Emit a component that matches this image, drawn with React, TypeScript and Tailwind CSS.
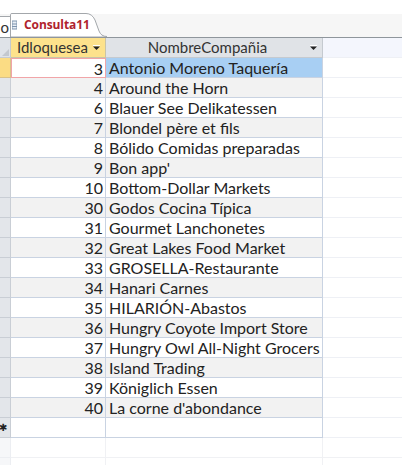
import React from "react";

const rows: Array<[number, string]> = [
    [3, "Antonio Moreno Taquería"],
    [4, "Around the Horn"],
    [6, "Blauer See Delikatessen"],
    [7, "Blondel père et fils"],
    [8, "Bólido Comidas preparadas"],
    [9, "Bon app'"],
    [10, "Bottom-Dollar Markets"],
    [30, "Godos Cocina Típica"],
    [31, "Gourmet Lanchonetes"],
    [32, "Great Lakes Food Market"],
    [33, "GROSELLA-Restaurante"],
    [34, "Hanari Carnes"],
    [35, "HILARIÓN-Abastos"],
    [36, "Hungry Coyote Import Store"],
    [37, "Hungry Owl All-Night Grocers"],
    [38, "Island Trading"],
    [39, "Königlich Essen"],
    [40, "La corne d'abondance"],
];

const DropArrow = () => (
    <svg width="9" height="6" viewBox="0 0 9 6" className="shrink-0">
        <rect x="1" y="0" width="7" height="1" fill="#ffffff" />
        <path d="M1 1.5 H8 L4.5 5 Z" fill="#222222" />
    </svg>
);

const Tab = () => (
    <div className="relative w-[97px] h-[24px] -ml-px">
        <svg width="97" height="24" viewBox="0 0 97 24" className="absolute inset-0">
            <path d="M0.5 24 V1.5 Q0.5 0.5 2 0.5 H76 Q82 0.5 85 7 L89 18 Q91 23.5 97 23.5 V24 Z" fill="#ffffff" stroke="#a3a7ab" />
        </svg>
        <div className="relative flex items-center h-full pl-[2px] gap-[7px]">
            <svg width="5" height="10" viewBox="0 0 5 10">
                <rect x="0" y="1" width="5" height="8" fill="#e8eef5" stroke="#7d93ad" strokeWidth="1" />
                <path d="M0 4 H5 M0 6.5 H5" stroke="#7d93ad" strokeWidth="1" />
            </svg>
            <span className="text-[12px] font-bold text-[#b0232d] tracking-[-0.1px]" style={{ fontFamily: "'Open Sans', 'Noto Sans', sans-serif" }}>
                Consulta11
            </span>
        </div>
    </div>
);

const App = () => {
    return (
        <div className="w-[402px] h-[465px] overflow-hidden bg-white text-[#222222]" style={{ fontFamily: "Lato, 'Liberation Sans', sans-serif" }}>
            <div className="h-[14px]" />
            {/* tab strip */}
            <div className="flex items-end h-[24px] bg-[#f6f6f6] border-b border-[#8f969c]">
                <div className="w-[11px] h-[21px] bg-white border-r border-t border-[#a3a7ab] flex items-center justify-end overflow-hidden">
                    <span className="text-[15px] text-[#333] leading-none pr-[1px]">o</span>
                </div>
                <Tab />
            </div>

            {/* header */}
            <div className="flex h-[20px] text-[15px] leading-none">
                <div className="relative w-[11px] h-full bg-[#dfe3e8] border-r border-b border-[#c5cad0]">
                    <svg width="7" height="7" viewBox="0 0 7 7" className="absolute right-[1px] bottom-[1px]">
                        <path d="M7 0 V7 H0 Z" fill="#c3c8ce" />
                    </svg>
                </div>
                <div className="w-[95px] h-full flex items-center bg-[#fde28c] border-r border-b border-[#c9c4a8] pl-[6px] pr-[4px]">
                    <span className="flex-1 text-[#333]">Idloquesea</span>
                    <DropArrow />
                </div>
                <div className="w-[217px] h-full flex items-center bg-[#e0e3e7] border-r border-b border-[#c5cad0] pr-[4px]">
                    <span className="flex-1 text-center text-[#333]">NombreCompañia</span>
                    <DropArrow />
                </div>
                <div className="flex-1 h-full bg-[#f4f6fd] border-b border-[#eef0f5]" />
            </div>

            {/* data rows */}
            {rows.map(([id, name], i) => {
                const first = i === 0;
                const alt = i % 2 === 1 ? "bg-[#f2f2f2]" : "bg-white";
                return (
                    <div key={id} className="flex h-[20px] text-[16px] leading-none">
                        <div className={`w-[11px] h-full border-r border-b ${first ? "bg-[#fbdc84] border-[#d9c28a]" : "bg-[#e3e6ea] border-[#c9ced5]"}`} />
                        <div className={`w-[95px] h-full flex items-center justify-end pr-[2px] pt-px ${first ? "bg-white border border-[#f1a5a8]" : `${alt} border-r border-b border-[#c9d3e2]`}`}>
                            {id}
                        </div>
                        <div className={`w-[217px] h-full flex items-center pl-[3px] pt-px border-r border-b border-[#c9d3e2] whitespace-nowrap overflow-hidden ${first ? "bg-[#a8cff3]" : alt}`}>
                            {name}
                        </div>
                        <div className="flex-1 h-full border-b border-[#eef0f5]" />
                    </div>
                );
            })}

            {/* new record row */}
            <div className="flex h-[20px] text-[15px] leading-none">
                <div className="w-[11px] h-full flex items-center justify-start bg-[#e3e6ea] border-r border-b border-[#c9ced5] overflow-hidden">
                    <span className="text-[10px] text-[#222] -ml-[1px]" style={{ fontFamily: "'DejaVu Sans', sans-serif" }}>✱</span>
                </div>
                <div className="w-[95px] h-full border-r border-b border-[#c9d3e2]" />
                <div className="w-[217px] h-full border-r border-b border-[#c9d3e2]" />
                <div className="flex-1 h-full border-b border-[#eef0f5]" />
            </div>

            {/* empty area */}
            {[0, 1].map((k) => (
                <div key={k} className="flex h-[20px]">
                    <div className="w-[11px] h-full bg-[#f6f7f9] border-r border-b border-[#eceef2]" />
                    <div className="w-[95px] h-full border-r border-b border-[#f0f1f4]" />
                    <div className="w-[217px] h-full border-r border-b border-[#f0f1f4]" />
                    <div className="flex-1 h-full border-b border-[#f0f1f4]" />
                </div>
            ))}
        </div>
    );
};

export default App;
